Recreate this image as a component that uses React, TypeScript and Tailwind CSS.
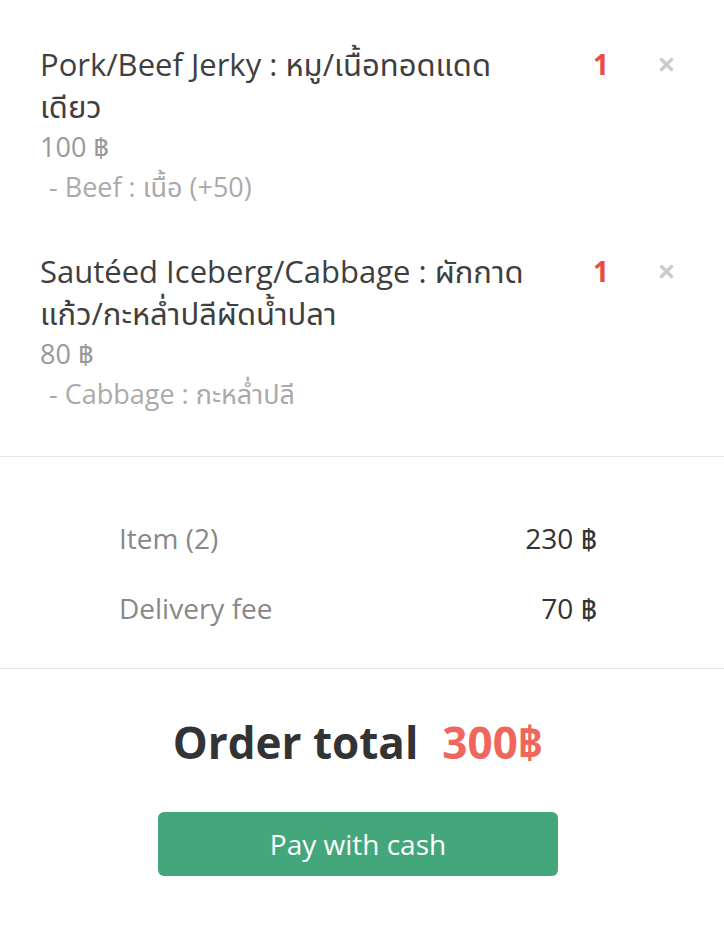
import React from "react";

type Item = {
  name: string;
  price: number;
  qty: number;
  option: string;
};

// \u200B marks where the title wraps
const items: Item[] = [
  {
    name: "Pork/Beef Jerky : หมู/เนื้อทอดแดด\u200Bเดียว",
    price: 100,
    qty: 1,
    option: "- Beef : เนื้อ (+50)",
  },
  {
    name: "Sautéed Iceberg/Cabbage : ผักกาด\u200Bแก้ว/กะหล่ำปลีผัดน้ำปลา",
    price: 80,
    qty: 1,
    option: "- Cabbage : กะหล่ำปลี",
  },
];

function RemoveIcon() {
  return (
    <svg width="15" height="15" viewBox="0 0 15 15" className="text-[#cccccc]">
      <path
        d="M2.5 2.5 L12.5 12.5 M12.5 2.5 L2.5 12.5"
        stroke="currentColor"
        strokeWidth="3.4"
        strokeLinecap="round"
      />
    </svg>
  );
}

export default function App() {
  return (
    <div
      className="w-[724px] min-h-[942px] bg-white"
      style={{ fontFamily: '"Open Sans", "Noto Sans", "Noto Sans Thai", sans-serif' }}
    >
      {/* cart items */}
      <div className="flex flex-col gap-[43px] pt-[43px] pb-[42px] pl-[40px]">
        {items.map((item, i) => (
          <div key={i} className="flex items-start">
            <div className="w-[500px]">
              <div className="text-[31px] leading-[42px] text-[#3f3f3f]">{item.name}</div>
              <div className="text-[27px] leading-[40px] text-[#999999]">{item.price} ฿</div>
              <div className="text-[27px] leading-[40px] text-[#aaaaaa] pl-[9px]">
                {item.option}
              </div>
            </div>
            <div className="w-[69px] text-right text-[28px] leading-[42px] font-bold text-[#ea4c43]">
              {item.qty}
            </div>
            <div className="ml-[50px] h-[42px] flex items-center">
              <RemoveIcon />
            </div>
          </div>
        ))}
      </div>

      {/* summary */}
      <div className="border-t border-[#e8e8e8] pt-[63px] pb-[42px] pl-[119px] pr-[127px] flex flex-col gap-[34px]">
        <div className="flex justify-between text-[28px] leading-[36px]">
          <span className="text-[#888888]">Item (2)</span>
          <span className="text-[#333333]">230 ฿</span>
        </div>
        <div className="flex justify-between text-[28px] leading-[36px]">
          <span className="text-[#888888]">Delivery fee</span>
          <span className="text-[#333333]">70 ฿</span>
        </div>
      </div>

      {/* total */}
      <div className="border-t border-[#e8e8e8]">
        <div className="w-[716px] flex flex-col items-center pt-[45px]">
          <div className="text-[44px] leading-[56px] font-bold text-[#333333]">
            Order total<span className="ml-[24px] text-[#ef675c]">300฿</span>
          </div>
          <button className="mt-[42px] w-[400px] h-[64px] rounded-[6px] bg-[#44a77c] text-white text-[28px]">
            Pay with cash
          </button>
        </div>
      </div>
    </div>
  );
}
